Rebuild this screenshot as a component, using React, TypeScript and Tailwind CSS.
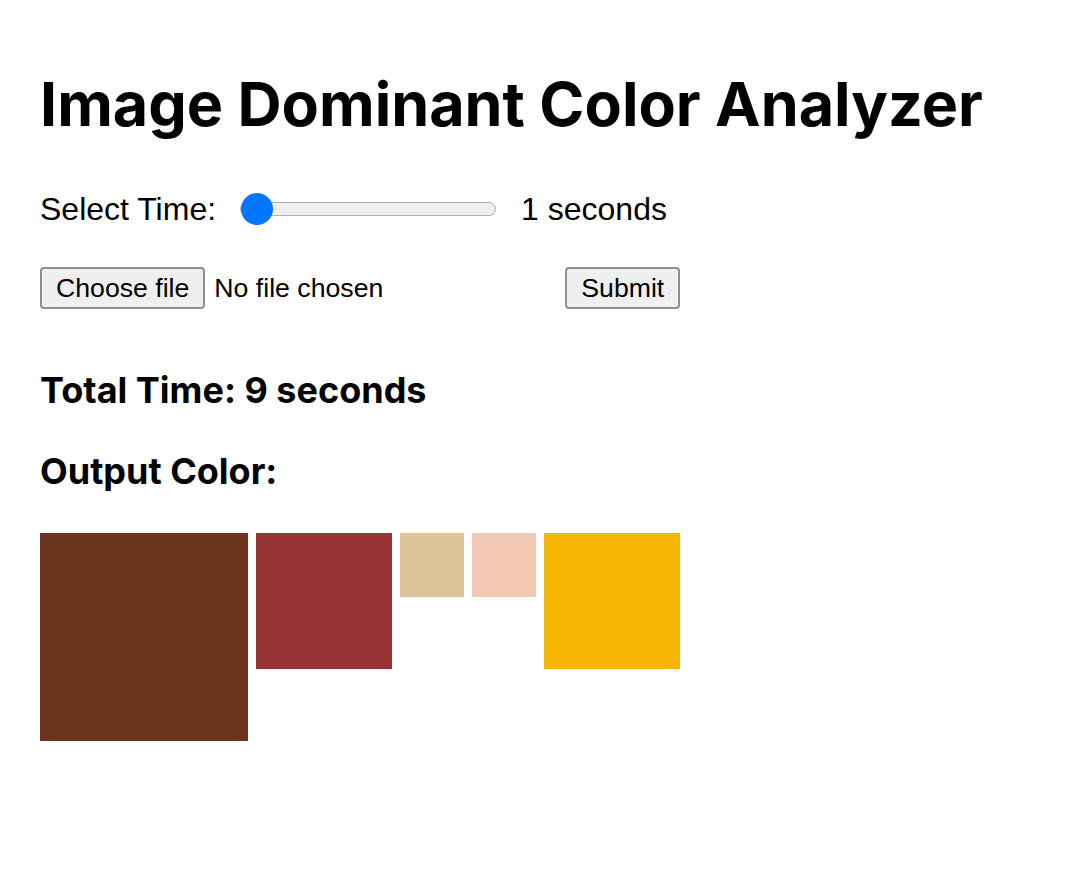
const swatches = [
  { color: "bg-[#6a331c]", size: "w-[208px] h-[208px]" },
  { color: "bg-[#973335]", size: "w-[136px] h-[136px]" },
  { color: "bg-[#dfc49a]", size: "w-[64px] h-[64px]" },
  { color: "bg-[#f2cab3]", size: "w-[64px] h-[64px]" },
  { color: "bg-[#f6b405]", size: "w-[136px] h-[136px]" },
];

const App = () => (
  <div className="min-h-screen bg-white text-black px-10 pt-[74px] font-['Inter',sans-serif]">
    <h1 className="text-[61px] leading-none font-bold">Image Dominant Color Analyzer</h1>

    {/* time slider */}
    <div className="mt-[58px] flex items-center h-8 font-['Liberation_Sans',Arial,sans-serif] text-[32px] leading-none">
      <span>Select Time:</span>
      <div className="relative ml-[24px] w-[256px] h-8 flex items-center">
        <div className="w-full h-[14px] rounded-full bg-[#efefef] border border-[#b2b2b2]" />
        <div className="absolute left-[1px] w-8 h-8 rounded-full bg-[#0075ff]" />
      </div>
      <span className="ml-[25px]">1 seconds</span>
    </div>

    {/* upload */}
    <div className="mt-[42px] flex items-center font-['Liberation_Sans',Arial,sans-serif] text-[26.67px] leading-none">
      <button className="h-[42px] px-[14px] bg-[#efefef] border-2 border-[#8f8f8f] rounded-[4px]">Choose file</button>
      <span className="ml-[9px]">No file chosen</span>
      <button className="ml-[182px] h-[42px] px-[14px] bg-[#efefef] border-2 border-[#8f8f8f] rounded-[4px]">Submit</button>
    </div>

    <h3 className="mt-[63px] text-[36px] leading-none font-bold">Total Time: 9 seconds</h3>
    <h3 className="mt-[45px] text-[36px] leading-none font-bold">Output Color:</h3>

    <div className="mt-[44px] flex items-start gap-2">
      {swatches.map((s, i) => (
        <div key={i} className={`${s.color} ${s.size}`} />
      ))}
    </div>
  </div>
);

export default App;
